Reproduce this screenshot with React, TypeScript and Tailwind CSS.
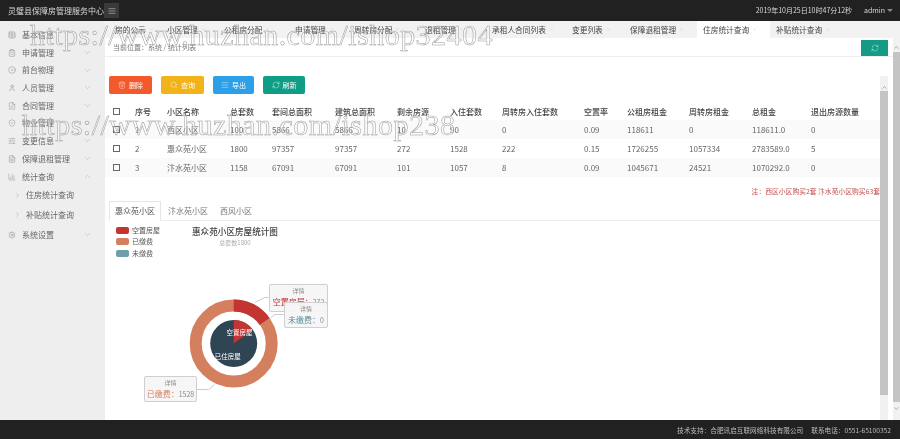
import React from "react";
import {
  ChevronDown,
  ChevronRight,
  ChevronUp,
  ClipboardList,
  CircleDot,
  FilePen,
  FileText,
  RefreshCw,
  Search,
  Settings,
  ShieldCheck,
  SlidersHorizontal,
  Table,
  Trash2,
  User,
  ChartColumn,
  AlignJustify,
  X,
} from "lucide-react";

const menu = [
  { title: "基本信息", icon: Table },
  { title: "申请管理", icon: ClipboardList, arrow: true },
  { title: "前台物理", icon: CircleDot, arrow: true },
  { title: "人员管理", icon: User, arrow: true },
  { title: "合同管理", icon: FilePen, arrow: true },
  { title: "物业管理", icon: ShieldCheck, arrow: true },
  { title: "变更信息", icon: SlidersHorizontal, arrow: true },
  { title: "保障退租管理", icon: FileText, arrow: true },
];

const tabs = [
  { title: "房的公示", w: "w-[52px]" },
  { title: "小区管理", w: "w-[57px]" },
  { title: "公租房分配", w: "w-[71px]" },
  { title: "申请管理", w: "w-[59px]" },
  { title: "周转房分配", w: "w-[71px]" },
  { title: "退租管理", w: "w-[67px]" },
  { title: "承租人合同列表", w: "w-[80px]" },
  { title: "变更列表", w: "w-[58px]" },
  { title: "保障退租管理", w: "w-[73px]" },
  { title: "住房统计查询", w: "w-[73px]", active: true },
  { title: "补贴统计查询", w: "w-[73px]" },
];

const head = ["序号", "小区名称", "总套数", "套间总面积", "建筑总面积", "剩余房源", "入住套数", "周转房入住套数", "空置率", "公租房租金", "周转房租金", "总租金", "退出房源数量"];

const rows = [
  ["1", "西区小区", "100", "5866", "5866", "10", "90", "0", "0.09", "118611", "0", "118611.0", "0"],
  ["2", "惠众苑小区", "1800", "97357", "97357", "272", "1528", "222", "0.15", "1726255", "1057334", "2783589.0", "5"],
  ["3", "汴水苑小区", "1158", "67091", "67091", "101", "1057", "8", "0.09", "1045671", "24521", "1070292.0", "0"],
];

const gridCols = "grid-cols-[22px_32px_63px_42px_63px_62px_53px_52px_82px_43px_62px_63px_59px_1fr]";

const Tooltip = ({ className, label, value, color }: { className: string; label: string; value: string; color: string }) => (
  <div className={`absolute border border-[#cfcfcf] rounded-[2px] bg-[#f6f6f6]/95 flex flex-col items-center ${className}`}>
    <div className="text-[6px] leading-[10px] text-[#888] mt-[1px]">详情</div>
    <div className="text-[8px] leading-[12px] whitespace-nowrap">
      <span className={color}>{label}：</span>
      <span className="text-[#888] text-[7px]">{value}</span>
    </div>
  </div>
);

export default function App() {
  return (
    <div className="relative w-[900px] h-[439px] overflow-hidden flex flex-col bg-white text-[#555] text-[8px] blur-[0.35px] font-['Noto_Sans_CJK_SC','Liberation_Sans',sans-serif]">
      <header className="h-[21px] shrink-0 bg-[#212121] flex items-center text-[#d8d8d8]">
        <div className="ml-[8px] w-[96px] text-[8px] whitespace-nowrap">灵璧县保障房管理服务中心</div>
        <div className="w-[15px] h-[15px] bg-[#3a3a3a] flex items-center justify-center">
          <AlignJustify size={8} strokeWidth={1.5} />
        </div>
        <div className="ml-auto text-[7px] whitespace-nowrap">2019年10月25日10时47分12秒</div>
        <div className="ml-[12px] mr-[7px] text-[7px] flex items-center gap-[2px]">
          admin
          <span className="w-0 h-0 border-x-[3px] border-x-transparent border-t-[3px] border-t-[#888]" />
        </div>
      </header>

      <div className="flex-1 flex min-h-0">
        <aside className="w-[105px] shrink-0 bg-[#eeeeee] pt-[5px] text-[#666]">
          {menu.map((m) => (
            <div key={m.title} className="h-[17.7px] flex items-center pl-[8px] pr-[13px]">
              <m.icon size={8} strokeWidth={1.2} className="text-[#777] shrink-0" />
              <span className="ml-[6px] whitespace-nowrap">{m.title}</span>
              {m.arrow && <ChevronDown size={9} strokeWidth={1} className="ml-auto text-[#999]" />}
            </div>
          ))}
          <div className="h-[18px] flex items-center pl-[8px] pr-[13px]">
            <ChartColumn size={8} strokeWidth={1.2} className="text-[#777]" />
            <span className="ml-[6px]">统计查询</span>
            <ChevronUp size={9} strokeWidth={1} className="ml-auto text-[#999]" />
          </div>
          <div className="h-[19px] flex items-center pl-[14px]">
            <ChevronRight size={7} strokeWidth={1.2} className="text-[#777]" />
            <span className="ml-[5px]">住房统计查询</span>
          </div>
          <div className="h-[20px] flex items-center pl-[14px]">
            <ChevronRight size={7} strokeWidth={1.2} className="text-[#777]" />
            <span className="ml-[5px]">补贴统计查询</span>
          </div>
          <div className="h-[20px] flex items-center pl-[8px] pr-[13px]">
            <Settings size={8} strokeWidth={1.2} className="text-[#777]" />
            <span className="ml-[6px]">系统设置</span>
            <ChevronDown size={9} strokeWidth={1} className="ml-auto text-[#999]" />
          </div>
        </aside>

        <main className="flex-1 flex flex-col min-w-0">
          <nav className="h-[17px] shrink-0 bg-[#f2f2f2] flex items-stretch pl-[4px] text-[#444] text-[7.7px]">
            {tabs.map((t) => (
              <div
                key={t.title}
                className={`${t.w} shrink-0 flex items-center pl-[6px] gap-[3px] whitespace-nowrap ${t.active ? "bg-white" : ""}`}
              >
                {t.title}
                <X size={5} strokeWidth={1} className="text-[#bbb] shrink-0" />
              </div>
            ))}
          </nav>

          <div className="flex-1 flex min-h-0">
            <div className="flex-1 flex flex-col min-w-0">
              <div className="h-[19px] shrink-0 border-b border-[#eeeeee] flex items-start pl-[8px] pr-[5px] text-[7px] text-[#777]">
                <span className="mt-[4px]">当前位置：系统 / 统计列表</span>
                <button className="ml-auto mt-[2px] w-[27px] h-[16px] bg-[#149a85] flex items-center justify-center text-[#cff]">
                  <RefreshCw size={8} strokeWidth={1.2} />
                </button>
              </div>

              <div className="flex-1 flex min-h-0 pt-[19px] pr-[5px]">
                <div className="flex-1 min-w-0">
                  <div className="flex gap-[9px] pl-[4px] text-white text-[7px]">
                    <button className="w-[43px] h-[18px] rounded-[2px] bg-[#f4592b] flex items-center justify-center gap-[3px]">
                      <Trash2 size={8} strokeWidth={1.2} />删除
                    </button>
                    <button className="w-[43px] h-[18px] rounded-[2px] bg-[#f2b21a] flex items-center justify-center gap-[3px]">
                      <Search size={8} strokeWidth={1.2} />查询
                    </button>
                    <button className="w-[41px] h-[18px] rounded-[2px] bg-[#2b9fe8] flex items-center justify-center gap-[3px]">
                      <AlignJustify size={8} strokeWidth={1.2} />导出
                    </button>
                    <button className="w-[42px] h-[18px] rounded-[2px] bg-[#0f9d85] flex items-center justify-center gap-[3px]">
                      <RefreshCw size={8} strokeWidth={1.2} />刷新
                    </button>
                  </div>

                  <div className={`grid ${gridCols} mt-[9px] pl-[8px] h-[17px] items-center font-medium text-[#444]`}>
                    <span className="w-[7px] h-[7px] border border-[#666]" />
                    {head.map((h) => (
                      <span key={h} className="whitespace-nowrap">{h}</span>
                    ))}
                  </div>
                  {rows.map((r, i) => (
                    <div key={r[0]} className={`grid ${gridCols} pl-[8px] h-[19px] items-center text-[#666] ${i !== 1 ? "bg-[#fafafa]" : ""}`}>
                      <span className="w-[7px] h-[7px] border border-[#666]" />
                      {r.map((c, j) => (
                        <span key={j} className="whitespace-nowrap">{c}</span>
                      ))}
                    </div>
                  ))}
                  <div className="mt-[8px] text-right text-[#c0504d] text-[6.8px] leading-[12px] whitespace-nowrap">注：西区小区购买2套 汴水苑小区购买63套</div>

                  <div className="mt-[4px] ml-[4px] h-[20px] flex border-b border-[#eeeeee] text-[#777]">
                    <div className="w-[52px] h-[20px] border border-[#e5e5e5] border-b-white bg-white flex items-center justify-center text-[#555]">惠众苑小区</div>
                    <div className="w-[54px] flex items-center justify-center">汴水苑小区</div>
                    <div className="w-[42px] flex items-center justify-center">西风小区</div>
                  </div>

                  <div className="relative flex ml-[11px] mt-[4px] h-[197px]">
                    <div className="w-[76px] shrink-0 mt-[1px] flex flex-col gap-[3.5px] text-[7px] text-[#555]">
                      <div className="flex items-center gap-[3px] h-[8px]"><span className="w-[13px] h-[7px] rounded-[2px] bg-[#c23531]" />空置房屋</div>
                      <div className="flex items-center gap-[3px] h-[8px]"><span className="w-[13px] h-[7px] rounded-[2px] bg-[#d4805f]" />已缴费</div>
                      <div className="flex items-center gap-[3px] h-[8px]"><span className="w-[13px] h-[7px] rounded-[2px] bg-[#6f9fa8]" />未缴费</div>
                    </div>
                    <div className="w-[86px] flex flex-col items-center">
                      <div className="text-[8.6px] leading-[12px] font-medium text-[#444] whitespace-nowrap">惠众苑小区房屋统计图</div>
                      <div className="text-[6px] leading-[10px] text-[#aaa] mt-[1px] whitespace-nowrap">总套数1800</div>
                    </div>

                    <svg className="absolute left-[70px] top-[52px]" width="120" height="140" viewBox="0 0 120 140">
                      <g transform="translate(47.7 66.5)">
                        <path d="M21 -41 L31 -46 L35 -46" fill="none" stroke="#aaa" strokeWidth="0.6" />
                        <path d="M34 -23 L41 -29 L50 -29" fill="none" stroke="#aaa" strokeWidth="0.6" />
                        <path d="M-37 46 L-25 46 L-19 41" fill="none" stroke="#aaa" strokeWidth="0.6" />
                        <circle r="38" fill="none" stroke="#d4805f" strokeWidth="12" />
                        <path d="M0 -44 A44 44 0 0 1 35.8 -25.6 L26 -18.6 A32 32 0 0 0 0 -32 Z" fill="#c23531" />
                        <circle r="23.5" fill="#2f4554" />
                        <path d="M0 0 L0 -23.5 A23.5 23.5 0 0 1 19.1 -13.7 Z" fill="#c23531" />
                        <text x="5.7" y="-9" textAnchor="middle" fontSize="6.5" fill="#fff">空置房屋</text>
                        <text x="-6" y="15" textAnchor="middle" fontSize="6.5" fill="#fff">已住房屋</text>
                      </g>
                    </svg>

                    <Tooltip className="left-[153px] top-[59px] w-[59px] h-[28px]" label="空置房屋" value="272" color="text-[#c23531]" />
                    <Tooltip className="left-[168px] top-[77px] w-[44px] h-[26px]" label="未缴费" value="0" color="text-[#5b8f99]" />
                    <Tooltip className="left-[28px] top-[151px] w-[53px] h-[26px]" label="已缴费" value="1528" color="text-[#d4805f]" />
                  </div>
                </div>

                <div className="w-[8px] shrink-0 bg-[#f1f1f1] flex flex-col items-center">
                  <ChevronUp size={7} strokeWidth={1.5} className="text-[#555] shrink-0 mt-[8px]" />
                  <div className="w-full flex-1 bg-[#c4c4c4] mb-[25px]" />
                </div>
              </div>
            </div>

            <div className="w-[7px] shrink-0 bg-[#f1f1f1] flex flex-col items-center">
              <ChevronUp size={7} strokeWidth={1.5} className="text-[#555] shrink-0 mt-[6px]" />
              <div className="w-full flex-1 bg-[#c4c4c4] mt-[1px] mb-[3px]" />
              <ChevronDown size={7} strokeWidth={1.5} className="text-[#555] shrink-0 mb-[8px]" />
            </div>
          </div>
        </main>
      </div>

      <footer className="h-[19px] shrink-0 bg-[#212121] flex items-center justify-end pr-[9px] text-[6.65px] text-[#bdbdbd] whitespace-nowrap">
        技术支持：合肥讯启互联网络科技有限公司
        <span className="ml-[8px]">联系电话：0551-65100352</span>
      </footer>

      <div className="absolute left-[30px] top-[17px] text-[30px] leading-[36px] tracking-[0.45px] font-['Liberation_Serif',serif] text-white/30 [-webkit-text-stroke:0.5px_#9a9a9a] whitespace-nowrap pointer-events-none">
        https://www.huzhan.com/ishop32404
      </div>
      <div className="absolute left-[22px] top-[107px] text-[30px] leading-[36px] tracking-[0.5px] font-['Liberation_Serif',serif] text-white/30 [-webkit-text-stroke:0.5px_#9a9a9a] whitespace-nowrap pointer-events-none">
        https://www.huzhan.com/ishop238
      </div>
    </div>
  );
}
